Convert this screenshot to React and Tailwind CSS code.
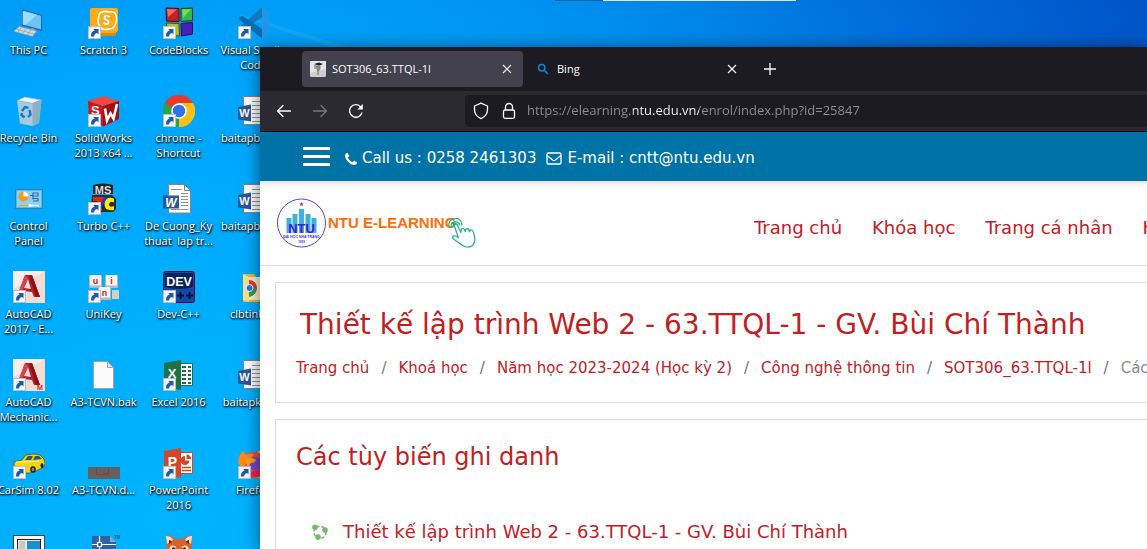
import React from "react";

const Shortcut = () => (
  <g>
    <rect x="0.5" y="19.5" width="12" height="12" fill="#f6f8fb" stroke="#b9c0c8" />
    <path d="M3 29.5c0-3.8 1.2-5.6 3.6-6.1L5.2 22h5.3v5.3L9 25.900c-2 .3-2.700 1.500-2.900 3.600z" fill="#1f5aa8" />
  </g>
);

const Icon = ({ children, shortcut }) => (
  <svg viewBox="0 0 32 32" className="h-8 w-8 shrink-0" aria-hidden="true">
    {children}
    {shortcut && <Shortcut />}
  </svg>
);

const glyph = { fontFamily: "Liberation Sans, sans-serif", fontWeight: 700 };

const ThisPc = () => (
  <Icon>
    <path d="M9 2.500 28.800 8v16L9 18.500z" fill="#2b5f86" />
    <path d="M9.800 3.700 28 8.800v13.800L9.800 17.600z" fill="#6bc4f5" />
    <path d="M9.800 3.700 24 7.700 12 18.200l-2.200-.6z" fill="#9adcfb" />
    <path d="m18 21 4 1.100v2.700l3 1-6 .2z" fill="#8ea3b3" />
    <path d="m6.500 19.500 17 4.500-4 5.500L.5 24.300z" fill="#cfd8df" stroke="#8796a3" strokeWidth=".6" />
    <path d="m4 22.300 17.500 4.800M8.500 20.500 5 25.300M13 21.500l-3.500 5M18 22.800 14.500 28" stroke="#8d9ba7" strokeWidth=".7" />
  </Icon>
);

const Scratch = () => (
  <Icon shortcut>
    <path d="M4 1h24q2 0 2 2v20q0 2-2 2l-1 4H4q-2 0-2-2V3q0-2 2-2z" fill="#ffab19" />
    <path d="M12 26h18v-2q0 2-2 2l-1 3H12z" fill="#d98a10" />
    <path d="M13 5.500q4-2 8-.5 6-1 7 3 1.500 5-.5 9-1.500 5-6.500 5-6 1.500-9-2-3-5-1.500-9 0-4 2.500-5.500z" fill="#ffab19" stroke="#fff" strokeWidth="1.600" />
    <path d="M21.500 10q-3-2.500-4.700-.5-1 2.500 1.700 3.500 3 1 1.700 3.500-2 1.500-4.700-.7" fill="none" stroke="#fff" strokeWidth="1.800" />
  </Icon>
);

const CodeBlocks = () => (
  <Icon shortcut>
    <path d="M3 1l13 .5v13L3.500 14z" fill="#c81f25" stroke="#33141a" />
    <path d="M4 2l10 .5L5 10z" fill="#ef6a6a" />
    <path d="M18 1.500 29.500 1v12.500L18 14.500z" fill="#39b54a" stroke="#163f1c" />
    <path d="m19 2.500 9-.5-8 9z" fill="#7bdc5c" />
    <path d="M3.500 16 16 16.500 16.500 29 4 28z" fill="#b8bf25" stroke="#4b4a12" />
    <path d="m18 16.500 11.500-1.200V27L18.500 29z" fill="#4a1fb5" stroke="#220d5c" />
  </Icon>
);

const VsCode = () => (
  <Icon shortcut>
    <path d="M24 1v9L4 24.500 1 22v-1.500L22.500 1.500z" fill="#0f78c0" />
    <path d="M24 31v-9L4 8.500 1 10.500V12l21.500 18.500z" fill="#0b6bb0" />
    <path d="m24 1 7.500 3.500v23L24 31z" fill="#1e97e6" />
  </Icon>
);

const Recycle = () => (
  <Icon>
    <path d="M4 5.500 12 2l16.500 3L26 28l-6.500 3L7 28.500z" fill="#b5cfde" opacity=".9" />
    <path d="m4 5.500 15.500 2.800L28.500 5 12 2z" fill="#eaf3f8" stroke="#8baabd" strokeWidth=".7" />
    <path d="M19.500 8.300 28.500 5 26 28l-6.500 3z" fill="#8fb0c3" />
    <path d="m9 16 3-4 3.500.8M16.500 15l1 4.500-2.500 2.500M11.500 22.500 8.500 20l.5-2" fill="none" stroke="#1673d1" strokeWidth="2.400" />
  </Icon>
);

const SolidWorks = () => (
  <Icon shortcut>
    <path d="m0 6 15-5 16 5-16 5z" fill="#f0493f" />
    <path d="m0 6 15 5v20L1 25z" fill="#d5121b" />
    <path d="m15 11 16-5v18l-16 7.500z" fill="#a30d12" />
    <text x="3" y="20" fontSize="13" fill="#fff" style={glyph}>S</text>
    <path d="m17 13.500 2 12 3.500-7 3 5L29 9" fill="none" stroke="#fff" strokeWidth="2.600" />
  </Icon>
);

const Chrome = () => (
  <Icon shortcut>
    <path d="M16 16 2.140 8A16 16 0 0 1 29.860 8z" fill="#e33b2e" />
    <path d="M16 16 29.860 8A16 16 0 0 1 16 32z" fill="#fbc116" />
    <path d="M16 16v16A16 16 0 0 1 2.140 8z" fill="#2ba24c" />
    <path d="M16 8h13.860A16 16 0 0 1 16 32l7-12z" fill="#fbc116" />
    <path d="M2.140 8 9 20l7 3.500L16 8z" fill="#2ba24c" />
    <path d="M2.140 8A16 16 0 0 1 29.860 8H16l-7 5z" fill="#e33b2e" />
    <circle cx="16" cy="16" r="7.800" fill="#fff" />
    <circle cx="16" cy="16" r="6.200" fill="#2c73e8" />
  </Icon>
);

const Word = () => (
  <Icon>
    <path d="M5.500 1.500h16l6 6v22.500h-22z" fill="#fff" stroke="#7c8794" />
    <path d="M21.500 1.500v6h6z" fill="#dfe4ea" stroke="#7c8794" />
    <path d="M8 6.500h11M18 10.500h7M18 13.500h7M18 16.500h7M18 19.500h7M18 22.500h7M8 26.500h17" stroke="#8b95a1" />
    <path d="M0 12.500h16v13H0z" fill="#2a569a" />
    <text x="8" y="23.500" textAnchor="middle" fontSize="12" fill="#fff" fontStyle="italic" style={glyph}>W</text>
  </Icon>
);

const WordNew = () => (
  <Icon>
    <path d="M5.500 1.500h26v28h-26z" fill="#fff" stroke="#7c8794" />
    <path d="M14 6.500h15M14 10.500h15M14 14.500h15M14 18.500h15M14 22.500h15M14 26.500h15" stroke="#8b95a1" />
    <path d="m0 12 13-2.500v17L0 24.500z" fill="#2a569a" />
    <text x="6.500" y="22" textAnchor="middle" fontSize="11" fill="#fff" style={glyph}>W</text>
  </Icon>
);

const ControlPanel = () => (
  <Icon>
    <rect x="2.500" y="6.500" width="27" height="19" fill="#59b8ee" stroke="#2f80b5" />
    <rect x="4" y="8" width="24" height="16" fill="#8ed1f7" />
    <circle cx="10.500" cy="13.500" r="5" fill="#f19c1f" />
    <path d="M10.500 13.500v-5a5 5 0 0 1 5 5z" fill="#f7fbfd" />
    <path d="M17 12.500h3m0-3v7m0-6.500h5v3h-5m0 2.500h5v2.500h-5" fill="none" stroke="#246fa5" strokeWidth="1.200" />
    <path d="M6 22.500h20" stroke="#fff" strokeWidth="1.200" />
    <path d="M6 22.500h11" stroke="#f19c1f" strokeWidth="1.200" />
    <circle cx="17" cy="22.500" r="1.500" fill="#fff" />
  </Icon>
);

const TurboC = () => (
  <Icon shortcut>
    <path d="M5 2q10-3 20 0v9H5z" fill="#222" />
    <text x="15" y="10.500" textAnchor="middle" fontSize="11" fill="#ddd" style={glyph}>MS</text>
    <path d="M4 12h20l4 4v10l-3 3H6l-3-3z" fill="#2a2a2a" />
    <path d="M5 14h12v4h-3v10H9V18H5z" fill="#e42312" />
    <path d="M26 15.500q-8-3-9.500 5-.5 8 9.500 6.500v-4q-5 2-5-2 1-3.500 5-1.500z" fill="#f8ec13" />
    <path d="M16 14 9 28h3l7-14z" fill="#2039d2" />
  </Icon>
);

const AutoCad = ({ m }) => (
  <Icon shortcut>
    <rect width="32" height="32" fill="#f3dcd6" />
    <path d="M0 0h32L0 18z" fill="#faeeea" />
    <path d="M12 4h7l8 22h-6l-2-5-8-1-4 4-2-1z" fill="#b51f28" />
    <path d="m15 8-4 9 7 1z" fill="#f3dcd6" />
    <path d="m12 4 3 3-7 16-4 2z" fill="#d9444a" />
    <path d="m19 4 8 22h-4L16 5z" fill="#8c1219" />
    {m && <text x="24" y="31" fontSize="7" fill="#e01e25" style={glyph}>M</text>}
  </Icon>
);

const UniKey = () => (
  <Icon shortcut>
    {[[1, 4, "u"], [17, 4, "i"], [10, 16, "n"]].map(([x, y, t]) => (
      <g key={t}>
        <rect x={x} y={y} width="13" height="13" rx="1" fill="#b9b9b9" />
        <rect x={x + 1} y={y} width="11" height="10.500" rx="1" fill="#f5f5f5" />
        <text x={x + 6.500} y={y + 8.500} textAnchor="middle" fontSize="9" fill="#d8151c" style={glyph}>{t}</text>
      </g>
    ))}
    <path d="M24 19h7v9h-7z" fill="#cfcfcf" />
  </Icon>
);

const DevCpp = () => (
  <Icon shortcut>
    <rect x=".5" y=".5" width="31" height="31" rx="2" fill="#1747a8" stroke="#0c1530" />
    <path d="M2 2h28v14Q16 20 2 16z" fill="#0c2157" />
    <text x="16" y="15" textAnchor="middle" fontSize="12.500" fill="#fff" style={glyph}>DEV</text>
    <path d="M14 24.500h7M17.500 21v7M23 24.500h7M26.500 21v7" stroke="#07122e" strokeWidth="2" />
  </Icon>
);

const Folder = () => (
  <Icon>
    <path d="M5 3h11l2 3h14v25H5z" fill="#e9b93d" />
    <path d="m5 3 6 3v25l-6-2z" fill="#ffe08a" />
    <path d="M11 6h21v23H11z" fill="#fff3cf" />
    <path d="M11 9a8 8 0 0 1 0 16z" fill="#e33b2e" />
    <path d="M11 17h7a8 8 0 0 1-7 9z" fill="#2ba24c" />
    <circle cx="11.500" cy="17" r="3.500" fill="#2c73e8" stroke="#fff" />
  </Icon>
);

const BlankFile = () => (
  <Icon>
    <path d="M5.500 2.500h14l6 6v21h-20z" fill="#fbfbfb" stroke="#9ba3ab" />
    <path d="M19.500 2.500v6h6z" fill="#e3e7eb" stroke="#9ba3ab" />
  </Icon>
);

const Excel = () => (
  <Icon shortcut>
    <path d="M15 4.500h14.500v22H15z" fill="#fff" stroke="#1d6f42" />
    <path d="M19 8h4M25 8h3M19 12h4M25 12h3M19 16h4M25 16h3M19 20h4M25 20h3M19 24h4M25 24h3" stroke="#1d7044" strokeWidth="2.200" />
    <path d="M1 4 18 1v30L1 28z" fill="#1f7244" />
    <text x="9" y="19" textAnchor="middle" fontSize="13" fill="#fff" style={glyph}>X</text>
  </Icon>
);

const PowerPoint = () => (
  <Icon shortcut>
    <path d="M15 5.500h14.500v21H15z" fill="#fff" stroke="#d24726" />
    <path d="M22 9v4.500h4.500A4.500 4.500 0 1 1 22 9z" fill="#d24726" />
    <path d="M23.500 7.500A4.500 4.500 0 0 1 28 12h-4.500z" fill="#d24726" />
    <path d="M19 20.500h9M19 23.500h9" stroke="#d24726" strokeWidth="1.300" />
    <path d="M1 4 18 1v30L1 28z" fill="#d24726" />
    <text x="9.500" y="20" textAnchor="middle" fontSize="14" fill="#fff" style={glyph}>P</text>
  </Icon>
);

const Car = () => (
  <Icon shortcut>
    <path d="m1 15 8-2 4-5q9-2 14 0l4 4q2 5 0 8l-8 4-6 2H8l-7-3z" fill="#f2d414" stroke="#5e5205" strokeWidth=".8" />
    <path d="m12 13 3-4h5l-2 4zM20 13l2-4h4l3 3z" fill="#2d5572" />
    <path d="M3 15h11l12-1" stroke="#fff6a0" fill="none" />
    <ellipse cx="20" cy="22.500" rx="2.800" ry="3.300" fill="#20242c" />
    <ellipse cx="20" cy="22.500" rx="1.300" ry="1.700" fill="#8591a5" />
    <ellipse cx="29" cy="18.500" rx="1.500" ry="2.600" fill="#20242c" />
  </Icon>
);

const DwgThumb = () => (
  <Icon>
    <rect y="20" width="32" height="12" fill="#616161" />
    <path d="M8.500 20v7.500h12V20M15 26.500h5" fill="none" stroke="#8d3b3b" />
  </Icon>
);

const Firefox = () => (
  <Icon shortcut>
    <path d="M19 7q3-6 8-7l5 2v29H17z" fill="#ffc928" />
    <circle cx="16" cy="18" r="13" fill="#f0512e" />
    <path d="M0 16Q0 8 5 4l3 4q4-2 8-1l-4 6-8 8z" fill="#ff8a16" />
    <path d="M7 26q9 7 20 2l-3-6z" fill="#e02b57" />
    <circle cx="17" cy="16.500" r="6.800" fill="#7246d5" />
    <path d="M8 13q6-4 10 0-1 3-5 3-3 2 0 5-5-1-5-8z" fill="#ff9f1c" />
  </Icon>
);

const AppWindow = () => (
  <Icon>
    <rect x=".5" y=".5" width="31" height="31" fill="#fff" stroke="#444" />
    <rect x="4.500" y="4.500" width="23" height="24" fill="#e9e9e9" stroke="#222" />
    <path d="M6 6h6v22H6z" fill="#c9c9c0" />
    <path d="M14 6h13v22H14z" fill="#1c8fc9" />
  </Icon>
);

const Drawing = () => (
  <Icon>
    <path d="M4 1h18l6 6v25H4z" fill="#2d62a3" />
    <path d="M22 1v6h6z" fill="#88a9d2" />
    <path d="M4 9.500h6M14 9.500h14M11.500 1v6M11.500 12v20" stroke="#fff" strokeWidth="1.200" />
    <rect x="9.500" y="7.500" width="4" height="4" fill="none" stroke="#fff" strokeWidth="1.200" />
    <text x="26" y="4" fontSize="4.500" fill="#24528e" style={glyph}>TM</text>
  </Icon>
);

const RedPanda = () => (
  <Icon>
    <path d="M3 1q6-1 9 3h8q3-4 9-3 1 8-1 11 3 6 1 12-5 8-13 8T3 24Q1 18 4 12 2 9 3 1z" fill="#d8622a" />
    <path d="M3 1q5 0 7 4l-6 4zM29 1q-5 0-7 4l6 4z" fill="#f5e3c8" />
    <path d="M6 5q2 0 3 2l-3 2zM26 5q-2 0-3 2l3 2z" fill="#5c2414" />
    <path d="M7 12q3-3 6 0l-2 4-5 1zM25 12q-3-3-6 0l2 4 5 1z" fill="#fbefdc" />
    <circle cx="10.500" cy="14" r="1.700" fill="#2b1610" />
    <circle cx="21.500" cy="14" r="1.700" fill="#2b1610" />
    <path d="M12 18h8l-2 5h-4z" fill="#fbefdc" />
  </Icon>
);

const AutoCadMechanical = () => <AutoCad m />;

const desktop = [
  [ThisPc, ["This PC"]], [Scratch, ["Scratch 3"]], [CodeBlocks, ["CodeBlocks"]], [VsCode, ["Visual Studio", "Code"]],
  [Recycle, ["Recycle Bin"]], [SolidWorks, ["SolidWorks", "2013 x64 ..."]], [Chrome, ["chrome -", "Shortcut"]], [WordNew, ["baitapbaitap"]],
  [ControlPanel, ["Control", "Panel"]], [TurboC, ["Turbo C++"]], [Word, ["De Cuong_Ky", "thuat  lap tr..."]], [WordNew, ["baitapbaitap"]],
  [AutoCad, ["AutoCAD", "2017 - E..."]], [UniKey, ["UniKey"]], [DevCpp, ["Dev-C++"]], [Folder, ["clbtinhoc"]],
  [AutoCadMechanical, ["AutoCAD", "Mechanic..."]], [BlankFile, ["A3-TCVN.bak"]], [Excel, ["Excel 2016"]], [WordNew, ["baitapktra..."]],
  [Car, ["CarSim 8.02"]], [DwgThumb, ["A3-TCVN.d..."]], [PowerPoint, ["PowerPoint", "2016"]], [Firefox, ["Firefox"]],
  [AppWindow, []], [Drawing, []], [RedPanda, []],
];

const Close = () => (
  <svg viewBox="0 0 10 10" className="h-[10px] w-[10px]" aria-hidden="true">
    <path d="m1 1 8 8M9 1 1 9" stroke="#fbfbfe" strokeWidth="1.100" />
  </svg>
);

const TitleBar = () => (
  <div className="flex h-11 items-center bg-[#1c1b22] pl-[42px] text-[11px] text-[#fbfbfe]" role="tablist">
    <div className="flex h-9 w-[221px] items-center rounded bg-[#42414d] px-2">
      <svg viewBox="0 0 16 16" className="h-4 w-4 shrink-0" aria-hidden="true">
        <rect width="16" height="16" rx="1.500" fill="#cfcfcf" />
        <path d="M0 0h16v8L0 12z" fill="#e6e6e6" />
        <path d="m4 3 5-1.500 4 1.500-4 1.700z" fill="#222" />
        <path d="M5.500 4.500h5V8L9 10H7z" fill="#8a8a8a" />
        <path d="M8 9v5M5 4v4" stroke="#666" />
      </svg>
      <button role="tab" aria-selected="true" className="ml-[6px] flex-1 truncate text-left">SOT306_63.TTQL-1l</button>
      <button aria-label="Close tab" className="p-[3px]"><Close /></button>
    </div>
    <div className="ml-1 flex h-9 w-[221px] items-center rounded pl-[10px] pr-2">
      <svg viewBox="0 0 12 12" className="h-3 w-3 shrink-0" aria-hidden="true">
        <circle cx="4.700" cy="4.700" r="3.200" fill="none" stroke="#1a7fd6" strokeWidth="1.500" />
        <path d="m7 7 3.800 3.800" stroke="#1a7fd6" strokeWidth="1.700" />
      </svg>
      <button role="tab" aria-selected="false" className="ml-2 flex-1 text-left">Bing</button>
      <button aria-label="Close tab" className="p-[3px]"><Close /></button>
    </div>
    <button aria-label="New tab" className="ml-4">
      <svg viewBox="0 0 12 12" className="h-3 w-3" aria-hidden="true">
        <path d="M6 0v12M0 6h12" stroke="#fbfbfe" strokeWidth="1.300" />
      </svg>
    </button>
  </div>
);

const Toolbar = () => (
  <div className="flex h-[41px] items-center border-b border-[#0c0c0d] bg-[#2b2a33] pl-4">
    <div className="flex gap-5">
      <button aria-label="Back">
        <svg viewBox="0 0 16 16" className="h-4 w-4" fill="none" stroke="#fbfbfe" strokeWidth="1.300" strokeLinecap="round" strokeLinejoin="round">
          <path d="M14.500 8H1.500M7 2.500 1.500 8 7 13.500" />
        </svg>
      </button>
      <button aria-label="Forward" disabled>
        <svg viewBox="0 0 16 16" className="h-4 w-4" fill="none" stroke="#77767f" strokeWidth="1.300" strokeLinecap="round" strokeLinejoin="round">
          <path d="M1.500 8h13M9 2.500 14.500 8 9 13.500" />
        </svg>
      </button>
      <button aria-label="Reload">
        <svg viewBox="0 0 16 16" className="h-4 w-4" fill="none" stroke="#fbfbfe" strokeWidth="1.400" strokeLinecap="round">
          <path d="M13.800 10a6.300 6.300 0 1 1-1.300-6.300" />
          <path d="M14.800 1v5.500H9.300z" fill="#fbfbfe" stroke="none" />
        </svg>
      </button>
    </div>
    <div className="ml-[101px] flex h-8 flex-1 items-center rounded-l bg-[#1c1b22] pl-2">
      <svg viewBox="0 0 16 18" className="h-[18px] w-4 shrink-0" fill="none" stroke="#fbfbfe" strokeWidth="1.300" strokeLinejoin="round" aria-hidden="true">
        <path d="M8 1.200 14.500 4v3.500c0 4-2.500 7.300-6.500 9.200C4 14.800 1.500 11.500 1.500 7.500V4z" />
      </svg>
      <svg viewBox="0 0 14 18" className="ml-[13px] h-[18px] w-[14px] shrink-0" fill="none" stroke="#fbfbfe" strokeWidth="1.300" aria-hidden="true">
        <rect x="1.500" y="8" width="11" height="8.300" rx="1.500" />
        <path d="M3.500 8V5a3.500 3.500 0 0 1 7 0v3" />
      </svg>
      <input
        aria-label="Address"
        defaultValue="https://elearning.ntu.edu.vn/enrol/index.php?id=25847"
        className="ml-[11px] min-w-0 flex-1 bg-[linear-gradient(to_right,#8f8f98_106px,#fbfbfe_106px,#fbfbfe_172px,#8f8f98_172px)] bg-clip-text text-[13px] text-transparent outline-none"
      />
    </div>
  </div>
);

const ContactBar = () => (
  <div className="relative z-10 flex h-[49px] items-center bg-[#0073a6] pl-[43px] text-[15px] text-white shadow-[0_2px_6px_rgba(0,0,0,0.15)]">
    <button aria-label="Menu" className="flex w-[27px] flex-col gap-[5px]">
      <span className="h-[3px] bg-white" />
      <span className="h-[3px] bg-white" />
      <span className="h-[3px] bg-white" />
    </button>
    <div className="ml-[15px] flex items-center pt-1">
      <svg viewBox="0 0 1408 1408" className="h-3 w-3" fill="#fff" aria-hidden="true">
        <path d="M1408 1112q0 27-10 70.500t-21 68.500q-21 50-122 106-94 51-186 51-27 0-52.500-3.500t-57.500-12.500-47.500-14.500-55.500-20.500-49-18q-98-35-175-83-128-79-264.500-215.500T152 776q-48-77-83-175-3-9-18-49t-20.500-55.500T16 449 3.500 391.500 0 339q0-92 51-186Q107 52 157 31q25-11 68.500-21T296 0q14 0 21 3 18 6 53 76 11 19 30 54t35 63.500 31 53.500q3 4 17.500 25t21.500 35.500 7 28.500q0 20-28.500 50t-62 55-62 53-28.500 46q0 9 5 22.500t8.500 20.500 14 24 11.500 19q76 137 174 235t235 174q2 1 19 11.500t24 14 20.500 8.500 22.500 5q18 0 46-28.500t53-62 55-62 50-28.500q14 0 28.500 7t35.500 21.500 25 17.500q25 15 53.500 31t63.500 35 54 30q70 35 76 53 3 7 3 21z" />
      </svg>
      <a href="#call" className="ml-[5px] whitespace-nowrap">Call us : 0258 2461303</a>
      <svg viewBox="0 0 16 13" className="ml-[10px] h-[13px] w-4" fill="none" stroke="#fff" strokeWidth="1.300" aria-hidden="true">
        <rect x="1" y="1" width="14" height="11" rx="1.200" />
        <path d="M1 3.500 7 8.300q1 .7 2 0l6-4.800" />
      </svg>
      <a href="#mail" className="ml-[5px] whitespace-nowrap">E-mail : cntt@ntu.edu.vn</a>
    </div>
  </div>
);

const Logo = () => (
  <a href="#home" className="flex items-center" aria-label="NTU E-Learning">
    <svg viewBox="0 0 50 50" className="h-[50px] w-[50px] shrink-0" aria-hidden="true">
      <circle cx="25.500" cy="25" r="24" fill="#fff" stroke="#5b3fe0" strokeWidth="1" />
      <path d="m25.500 4 .6 1.600h1.700l-1.400 1 .5 1.700-1.400-1-1.400 1 .5-1.700-1.400-1h1.700z" fill="#d31f26" />
      <path d="M10.500 20h5v15h-5zM16.500 16h5v19h-5zM23 11h5v24h-5zM29.500 16h5v19h-5zM35.500 20h5v15h-5z" fill="#3fb1dd" />
      <text x="25.500" y="34.500" textAnchor="middle" fontSize="13" fill="#3a22dd" style={glyph}>NTU</text>
      <text x="25.500" y="40" textAnchor="middle" fontSize="3.500" fill="#4a30d8" style={glyph}>ĐẠI HỌC NHA TRANG</text>
      <text x="25.500" y="44.500" textAnchor="middle" fontSize="3" fill="#4a30d8" style={glyph}>1959</text>
    </svg>
    <span className="relative ml-[2px] whitespace-nowrap font-['Liberation_Sans',sans-serif] text-[15px] font-bold leading-6 text-[#ff6d0a]">
      NTU E-LEARNING
      <svg viewBox="0 0 28 30" className="absolute -right-5 top-[7px] h-[30px] w-7" fill="none" stroke="#18b67e" strokeWidth="1.200" strokeLinecap="round" strokeLinejoin="round" aria-hidden="true">
        <path d="M1.300 9a6.500 6.500 0 1 1 12.500-1.500M3.500 9.500A4.300 4.300 0 1 1 11.700 7M5.600 8.500a2.100 2.100 0 1 1 3.700-2" />
        <path d="M6.500 8.200Q6.800 5.500 9.300 7l3.700 7.500q-.2-4.200 1.800-4t2.400 3.200q.2-3.200 2-3t2.200 3.200q.6-2.300 2.200-1.900 1.600.5 2.700 5.500 1.500 6-1.300 9.500-4 3.500-9.500 1-4-2.500-10-7-2-2.500.5-3.200 2-.3 4.300 1.700L6.500 8.200z" fill="#fff" />
      </svg>
    </span>
  </a>
);

const SiteHeader = () => (
  <header className="flex h-[85px] items-center border-b border-[#dedede] bg-white pl-4">
    <Logo />
    <nav className="ml-auto flex w-[393px] shrink-0 gap-[30px] overflow-hidden whitespace-nowrap pt-2 text-[18px] text-[#c1201f]">
      <a href="#home">Trang chủ</a>
      <a href="#courses">Khóa học</a>
      <a href="#me">Trang cá nhân</a>
      <a href="#help">H</a>
    </nav>
  </header>
);

const crumbs = ["Trang chủ", "Khoá học", "Năm học 2023-2024 (Học kỳ 2)", "Công nghệ thông tin", "SOT306_63.TTQL-1l"];

const Page = () => (
  <main className="flex flex-1 flex-col gap-4 bg-white pl-[15px] pt-4 text-[#c1201f]">
    <section className="h-[121px] overflow-hidden border-y border-l border-[#dedede] pl-5 pt-[25px]">
      <h1 className="whitespace-nowrap pl-1 text-[28px] leading-[34px]">Thiết kế lập trình Web 2 - 63.TTQL-1 - GV. Bùi Chí Thành</h1>
      <ol className="mt-[15px] flex whitespace-nowrap text-[15px] leading-[22px]">
        {crumbs.map((c) => (
          <li key={c} className="flex">
            <a href="#crumb">{c}</a>
            <span className="px-3 text-[#6c757d]">/</span>
          </li>
        ))}
        <li className="text-[#868e96]">Các tùy biến ghi danh</li>
      </ol>
    </section>
    <section className="flex-1 border-l border-t border-[#dedede] pl-5 pt-5">
      <h2 className="text-[24px] leading-[34px]">Các tùy biến ghi danh</h2>
      <div className="mt-11 flex items-center pl-4">
        <svg viewBox="0 0 16 16" className="h-4 w-4 shrink-0" aria-hidden="true">
          <circle cx="8" cy="8.300" r="6" fill="none" stroke="#7db673" strokeWidth="1.500" strokeDasharray="3 1.800" />
          <circle cx="3" cy="3.300" r="2.800" fill="#7db673" />
          <circle cx="13" cy="6" r="2.800" fill="#7db673" />
          <circle cx="6" cy="13.100" r="2.800" fill="#7db673" />
        </svg>
        <h3 className="ml-[15px] whitespace-nowrap text-[18px] leading-7">
          <a href="#course">Thiết kế lập trình Web 2 - 63.TTQL-1 - GV. Bùi Chí Thành</a>
        </h3>
      </div>
    </section>
  </main>
);

export default function App() {
  return (
    <div className="relative h-screen overflow-hidden bg-[radial-gradient(ellipse_1000px_900px_at_160px_520px,#00b4ff_0%,#00a6fc_50%,#0090ee_70%,#0070dc_90%,#0046be_125%)] font-['Open_Sans','Noto_Sans',sans-serif]">
      <svg viewBox="0 0 160 48" className="absolute left-60 top-0 h-12 w-40" aria-hidden="true">
        <path d="M0 14 112 48H96L0 17z" fill="#35b8ff" opacity=".3" />
      </svg>
      <div className="absolute left-[603px] top-0 h-px w-[193px] bg-[#dfe3e6]" />
      <div className="absolute left-[555px] top-0 h-px w-12 bg-[#0a62ae]" />
      <div className="relative -ml-[9px] grid w-[300px] grid-cols-4 pt-[7px]">
        {desktop.map(([Glyph, lines], i) => (
          <div key={i} className="flex h-[88px] flex-col items-center text-[11px] leading-[15px] text-white">
            <Glyph />
            <div className="mt-[3px] text-center [text-shadow:1px_1px_2px_#000,0_1px_2px_#000]">
              {lines.map((l) => (
                <div key={l} className="whitespace-pre">{l}</div>
              ))}
            </div>
          </div>
        ))}
      </div>
      <div className="absolute bottom-0 left-[260px] right-0 top-[47px] flex flex-col overflow-hidden shadow-[0_2px_16px_rgba(0,0,0,0.55)]">
        <TitleBar />
        <Toolbar />
        <div className="flex flex-1 flex-col font-['DejaVu_Sans',sans-serif]">
          <ContactBar />
          <SiteHeader />
          <Page />
        </div>
      </div>
    </div>
  );
}
